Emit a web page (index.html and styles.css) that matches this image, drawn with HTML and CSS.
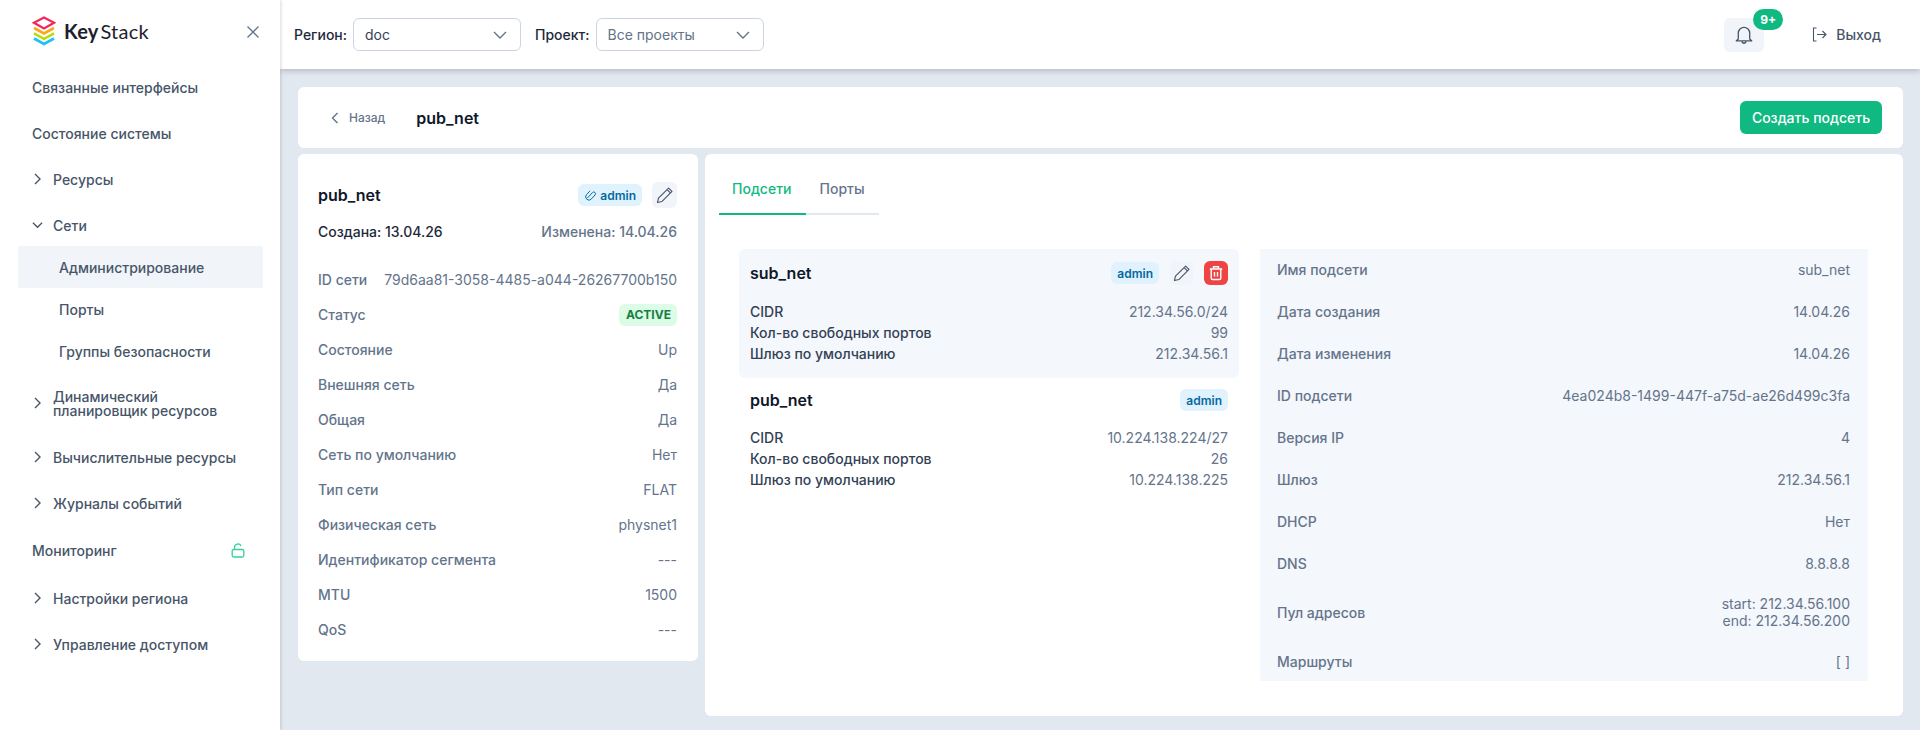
FILE: index.html
```html
<!DOCTYPE html>
<html lang="ru">
<head>
    <meta charset="UTF-8">
    <meta name="viewport" content="width=device-width, initial-scale=1.0">
    <title>pub_net</title>
    <link rel="stylesheet" href="styles.css">
</head>
<body>
    <aside class="sidebar">
        <div class="logo-row">
            <svg class="logo-mark" width="24" height="30" viewBox="0 0 24 30" fill="none" stroke-width="2.600" stroke-linejoin="miter">
                <path d="M2 22.500l10 5.500 10 -5.500" stroke="#19c3f5"/>
                <path d="M2 17.300l10 5.500 10 -5.500" stroke="#b5dc10"/>
                <path d="M2 12l10 5.500 10 -5.500" stroke="#f7a81b"/>
                <path d="M12 1.500l10 5.300 -10 5.700 -10 -5.700z" stroke="#f2295b" fill="#fff" stroke-width="2.200"/>
            </svg>
            <span class="logo-text">Key<span class="logo-light">Stack</span></span>
            <svg class="close-icon" width="14" height="14" viewBox="0 0 14 14" fill="none" stroke="#64748b" stroke-width="1.300"><path d="M1.500 1.500l11 11M12.500 1.500l-11 11"/></svg>
        </div>
        <nav class="menu">
            <a class="menu-item">Связанные интерфейсы</a>
            <a class="menu-item">Состояние системы</a>
            <a class="menu-item"><svg class="chev" viewBox="0 0 10 12"><path d="M2.500 1l5 5 -5 5"/></svg>Ресурсы</a>
            <a class="menu-item"><svg class="chev" viewBox="0 0 12 10"><path d="M1 2.500l5 5 5 -5"/></svg>Сети</a>
            <a class="menu-sub active">Администрирование</a>
            <a class="menu-sub">Порты</a>
            <a class="menu-sub">Группы безопасности</a>
            <a class="menu-item menu-tall"><svg class="chev" viewBox="0 0 10 12"><path d="M2.500 1l5 5 -5 5"/></svg><span class="two-line">Динамический<br>планировщик ресурсов</span></a>
            <a class="menu-item"><svg class="chev" viewBox="0 0 10 12"><path d="M2.500 1l5 5 -5 5"/></svg>Вычислительные ресурсы</a>
            <a class="menu-item"><svg class="chev" viewBox="0 0 10 12"><path d="M2.500 1l5 5 -5 5"/></svg>Журналы событий</a>
            <a class="menu-item menu-lock">Мониторинг
                <svg width="14" height="15" viewBox="0 0 14 15" fill="none" stroke="#34d399" stroke-width="1.300"><rect x="1.200" y="6.500" width="11.600" height="7.500" rx="1.500"/><path d="M3.500 6.500V4.200a3.400 3.400 0 0 1 6.500 -1.200"/></svg>
            </a>
            <a class="menu-item"><svg class="chev" viewBox="0 0 10 12"><path d="M2.500 1l5 5 -5 5"/></svg>Настройки региона</a>
            <a class="menu-item"><svg class="chev" viewBox="0 0 10 12"><path d="M2.500 1l5 5 -5 5"/></svg>Управление доступом</a>
        </nav>
    </aside>

    <div class="main">
        <header class="topbar">
            <span class="select-label">Регион:</span>
            <div class="select">doc
                <svg class="select-chev" viewBox="0 0 14 8"><path d="M1 1l6 6 6 -6"/></svg>
            </div>
            <span class="select-label project-label">Проект:</span>
            <div class="select select-muted">Все проекты
                <svg class="select-chev" viewBox="0 0 14 8"><path d="M1 1l6 6 6 -6"/></svg>
            </div>
            <div class="bell">
                <svg width="18" height="20" viewBox="0 0 18 20" fill="none" stroke="#475569" stroke-width="1.300" stroke-linejoin="round"><path d="M3.300 14V8a5.700 5.700 0 0 1 11.400 0v6l2 1.800H1.300z"/><path d="M6.800 16.500a2.300 2.300 0 0 0 4.400 0" stroke-width="1.500"/></svg>
                <span class="bell-badge">9+</span>
            </div>
            <a class="logout">
                <svg width="15" height="15" viewBox="0 0 15 15" fill="none" stroke="#475569" stroke-width="1.100"><path d="M4.500 1H1.500v13h3"/><path d="M5 7.500h9M10.500 4l3.500 3.500 -3.500 3.500"/></svg>
                Выход
            </a>
        </header>

        <div class="content">
            <div class="page-head">
                <a class="back"><svg width="8" height="12" viewBox="0 0 8 12" fill="none" stroke="#64748b" stroke-width="1.400"><path d="M6.500 1l-5 5 5 5"/></svg>Назад</a>
                <h1 class="page-title">pub_net</h1>
                <button class="btn-create">Создать подсеть</button>
            </div>

            <div class="columns">
                <section class="net-card">
                    <div class="net-head">
                        <h2 class="net-name">pub_net</h2>
                        <span class="tag"><svg width="13" height="13" viewBox="0 0 12 12" fill="none" stroke="#0369a1" stroke-width="0.900"><path d="M3.200 8.300l4.600 -5a1.600 1.600 0 0 1 2.400 2.200L6.800 9.200a3 3 0 0 1 -4.500 -4L5.600 1.700"/></svg>admin</span>
                        <button class="icon-btn"><svg class="pencil" viewBox="0 0 16 16"><path d="M11.200 1.800l3 3 -9 9 -3.900 .9 .9 -3.900z M9.800 3.200l3 3"/></svg></button>
                    </div>
                    <div class="dates">
                        <span class="created">Создана: 13.04.26</span>
                        <span class="changed">Изменена: 14.04.26</span>
                    </div>
                    <div class="net-rows">
                        <div class="row"><span class="label">ID сети</span><span>79d6aa81-3058-4485-a044-26267700b150</span></div>
                        <div class="row"><span class="label">Статус</span><span class="status">ACTIVE</span></div>
                        <div class="row"><span class="label">Состояние</span><span>Up</span></div>
                        <div class="row"><span class="label">Внешняя сеть</span><span>Да</span></div>
                        <div class="row"><span class="label">Общая</span><span>Да</span></div>
                        <div class="row"><span class="label">Сеть по умолчанию</span><span>Нет</span></div>
                        <div class="row"><span class="label">Тип сети</span><span>FLAT</span></div>
                        <div class="row"><span class="label">Физическая сеть</span><span>physnet1</span></div>
                        <div class="row"><span class="label">Идентификатор сегмента</span><span>---</span></div>
                        <div class="row"><span class="label">MTU</span><span>1500</span></div>
                        <div class="row"><span class="label">QoS</span><span>---</span></div>
                    </div>
                </section>

                <section class="detail-card">
                    <div class="tabs">
                        <a class="tab tab-active">Подсети</a>
                        <a class="tab">Порты</a>
                    </div>
                    <div class="detail-grid">
                        <div class="subnets">
                            <div class="subnet subnet-active">
                                <div class="subnet-head">
                                    <h3 class="subnet-name">sub_net</h3>
                                    <span class="tag tag-plain">admin</span>
                                    <button class="icon-btn icon-btn-sub"><svg class="pencil" viewBox="0 0 16 16"><path d="M11.200 1.800l3 3 -9 9 -3.900 .9 .9 -3.900z M9.800 3.200l3 3"/></svg></button>
                                    <button class="icon-btn icon-btn-del"><svg width="16" height="16" viewBox="0 0 16 16" fill="none" stroke="#fff" stroke-width="1.400"><path d="M1.800 4h12.400M5.500 4V1.800h5V4M3.200 4v9.200c0 .8 .5 1.300 1.300 1.300h7c.8 0 1.300 -.5 1.300 -1.300V4M6.500 7v4.500M9.500 7v4.500"/></svg></button>
                                </div>
                                <div class="kv"><span class="label">CIDR</span><span>212.34.56.0/24</span></div>
                                <div class="kv"><span class="label">Кол-во свободных портов</span><span>99</span></div>
                                <div class="kv"><span class="label">Шлюз по умолчанию</span><span>212.34.56.1</span></div>
                            </div>
                            <div class="subnet">
                                <div class="subnet-head">
                                    <h3 class="subnet-name">pub_net</h3>
                                    <span class="tag tag-plain">admin</span>
                                </div>
                                <div class="kv"><span class="label">CIDR</span><span>10.224.138.224/27</span></div>
                                <div class="kv"><span class="label">Кол-во свободных портов</span><span>26</span></div>
                                <div class="kv"><span class="label">Шлюз по умолчанию</span><span>10.224.138.225</span></div>
                            </div>
                        </div>
                        <div class="props">
                            <div class="prop"><span class="label">Имя подсети</span><span>sub_net</span></div>
                            <div class="prop"><span class="label">Дата создания</span><span>14.04.26</span></div>
                            <div class="prop"><span class="label">Дата изменения</span><span>14.04.26</span></div>
                            <div class="prop"><span class="label">ID подсети</span><span>4ea024b8-1499-447f-a75d-ae26d499c3fa</span></div>
                            <div class="prop"><span class="label">Версия IP</span><span>4</span></div>
                            <div class="prop"><span class="label">Шлюз</span><span>212.34.56.1</span></div>
                            <div class="prop"><span class="label">DHCP</span><span>Нет</span></div>
                            <div class="prop"><span class="label">DNS</span><span>8.8.8.8</span></div>
                            <div class="prop prop-tall"><span class="label">Пул адресов</span><span class="pool">start: 212.34.56.100<br>end: 212.34.56.200</span></div>
                            <div class="prop"><span class="label">Маршруты</span><span>[ ]</span></div>
                        </div>
                    </div>
                </section>
            </div>
        </div>
    </div>
</body>
</html>
```

FILE: styles.css
```css
:root {
    --color-primary: #10b981;
    --color-background: #e2e8f0;
    --color-panel: #f1f5f9;
    --color-text: #334155;
    --color-nav: #475569;
    --color-muted: #64748b;
}

* {
    box-sizing: border-box;
}

body {
    font-family: 'Inter', sans-serif;
    font-size: 14px;
    margin: 0;
    height: 730px;
    overflow: hidden;
    display: flex;
    background-color: var(--color-background);
    color: var(--color-text);
}

h1, h2, h3 {
    margin: 0;
}

button {
    font-family: inherit;
    border: none;
    cursor: pointer;
}

.label {
    font-weight: 500;
}

/* боковое меню */
.sidebar {
    width: 280px;
    flex-shrink: 0;
    background-color: white;
    box-shadow: 1px 0 3px rgba(0, 0, 0, 0.15);
    z-index: 2;
}

.logo-row {
    height: 64px;
    padding: 16px 0 0 32px;
    display: flex;
    align-items: flex-start;
}

.logo-text {
    margin: 3px 0 0 8px;
    font-family: 'Lato', sans-serif;
    font-size: 20px;
    line-height: 24px;
    font-weight: 700;
    letter-spacing: 0.2px;
    color: #1e1e2e;
}

.logo-light {
    font-weight: 400;
    margin-left: 2px;
}

.close-icon {
    margin: 9px 20px 0 auto;
}

.menu {
    display: flex;
    flex-direction: column;
}

.menu-item {
    height: 46px;
    padding: 0 32px;
    display: flex;
    align-items: center;
    font-weight: 500;
    font-size: 14px;
    color: var(--color-nav);
}

.menu-tall {
    height: 62px;
    padding-right: 10px;
}

.two-line {
    line-height: 14px;
    padding-top: 2px;
}

.menu-lock {
    height: 49px;
    justify-content: space-between;
    padding-right: 35px;
}

.chev {
    width: 11px;
    height: 12px;
    margin-right: 10px;
    fill: none;
    stroke: var(--color-nav);
    stroke-width: 1.400;
}

.menu-sub {
    height: 42px;
    margin: 0 17px 0 18px;
    padding-left: 41px;
    display: flex;
    align-items: center;
    font-weight: 500;
    font-size: 14px;
    color: var(--color-nav);
}

.menu-sub.active {
    margin-top: -2px;
    background-color: var(--color-panel);
    border-radius: 2px;
}

/* верхняя панель */
.main {
    flex: 1;
    min-width: 0;
}

.topbar {
    height: 69px;
    padding: 0 39px 0 14px;
    display: flex;
    align-items: center;
    background-color: white;
    box-shadow: 0 2px 6px rgba(0, 0, 0, 0.2);
    position: relative;
}

.select-label {
    font-weight: 500;
    color: #1e293b;
    margin-right: 6px;
}

.project-label {
    margin-left: 14px;
}

.select {
    width: 168px;
    height: 33px;
    padding: 0 12px 0 11px;
    display: flex;
    align-items: center;
    justify-content: space-between;
    border: 1px solid #cbd5e1;
    border-radius: 6px;
    color: var(--color-text);
}

.select-muted {
    color: var(--color-muted);
}

.select-chev {
    width: 14px;
    height: 8px;
    margin-right: 1px;
    fill: none;
    stroke: var(--color-muted);
    stroke-width: 1.400;
}

.bell {
    width: 40px;
    height: 34px;
    margin-left: auto;
    display: flex;
    align-items: center;
    justify-content: center;
    position: relative;
    background-color: var(--color-panel);
    border-radius: 6px;
}

.bell-badge {
    position: absolute;
    top: -9px;
    right: -19px;
    width: 30px;
    height: 21px;
    display: flex;
    align-items: center;
    justify-content: center;
    background-color: var(--color-primary);
    color: white;
    border-radius: 11px;
    font-size: 12px;
    font-weight: 700;
}

.logout {
    margin-left: 48px;
    display: flex;
    align-items: center;
    gap: 9px;
    font-size: 14px;
    font-weight: 500;
    color: var(--color-nav);
}

/* содержимое */
.content {
    padding: 18px 17px 0 18px;
}

.page-head {
    height: 61px;
    padding: 0 21px 0 33px;
    display: flex;
    align-items: center;
    background-color: white;
    border-radius: 6px;
}

.back {
    display: flex;
    align-items: center;
    gap: 10px;
    font-size: 12px;
    font-weight: 500;
    color: var(--color-muted);
}

.page-title {
    margin-left: 31px;
    font-size: 16px;
    font-weight: 600;
    color: #0f172a;
}

.btn-create {
    margin-left: auto;
    width: 142px;
    height: 33px;
    background-color: var(--color-primary);
    color: white;
    border-radius: 6px;
    font-size: 14px;
    font-weight: 500;
}

.columns {
    margin-top: 6px;
    display: flex;
    align-items: flex-start;
    gap: 7px;
}

.net-card {
    width: 400px;
    height: 507px;
    padding: 28px 21px 0 20px;
    flex-shrink: 0;
    background-color: white;
    border-radius: 6px;
}

.net-head {
    display: flex;
    align-items: center;
    height: 26px;
}

.net-name {
    margin-right: auto;
    font-size: 16px;
    font-weight: 600;
    color: #0f172a;
}

.tag {
    height: 22px;
    padding: 0 6px 0 6px;
    display: inline-flex;
    align-items: center;
    gap: 3px;
    background-color: #e0f2fe;
    color: #0369a1;
    border-radius: 6px;
    font-size: 12px;
    font-weight: 600;
}

.tag-plain {
    padding: 0 6px;
}

.icon-btn {
    width: 25px;
    height: 26px;
    margin-left: 10px;
    padding: 0;
    display: flex;
    align-items: center;
    justify-content: center;
    background-color: var(--color-panel);
    border-radius: 6px;
}

.pencil {
    width: 18px;
    height: 18px;
    fill: none;
    stroke: #475569;
    stroke-width: 1;
    stroke-linejoin: round;
}

.dates {
    margin-top: 14px;
    display: flex;
    justify-content: space-between;
    line-height: 20px;
    color: var(--color-muted);
}

.created {
    color: #1e293b;
    font-weight: 500;
}

.changed {
    font-weight: 500;
}

.net-rows {
    margin-top: 20px;
}

.row {
    height: 35px;
    display: flex;
    align-items: center;
    justify-content: space-between;
    color: var(--color-muted);
}

.status {
    height: 22px;
    padding: 0 6px 0 7px;
    display: flex;
    align-items: center;
    background-color: #dcfce7;
    color: #15803d;
    border-radius: 6px;
    font-size: 12px;
    font-weight: 700;
}

.detail-card {
    flex: 1;
    height: 562px;
    padding: 0 14px;
    background-color: white;
    border-radius: 6px;
}

.tabs {
    display: flex;
    width: 160px;
    padding-top: 26px;
    border-bottom: 2px solid #e2e8f0;
}

.tab {
    height: 33px;
    padding: 0 14px 0 14px;
    color: var(--color-muted);
    font-weight: 500;
}

.tab-active {
    padding-left: 13px;
    padding-right: 14px;
    color: var(--color-primary);
    border-bottom: 2px solid var(--color-primary);
    margin-bottom: -2px;
    height: 35px;
}

.detail-grid {
    margin: 34px 21px 0 20px;
    display: flex;
    gap: 21px;
}

.subnets {
    width: 500px;
}

.subnet {
    height: 127px;
    padding: 7px 11px 0;
    border-radius: 6px;
}

.subnet-active {
    height: 129px;
    padding-top: 9px;
    background-color: #f4f7fb;
}

.subnet-head {
    height: 30px;
    margin-bottom: 12px;
    display: flex;
    align-items: center;
}

.subnet-active .subnet-head {
    margin-bottom: 13px;
}

.subnet-name {
    margin-right: auto;
    font-size: 16px;
    font-weight: 600;
    color: #0f172a;
}

.icon-btn-sub {
    width: 23px;
    height: 24px;
    margin-left: 11px;
}

.icon-btn-del {
    width: 24px;
    height: 24px;
    margin-left: 11px;
    background-color: #ef4444;
    border-radius: 6px;
}

.kv {
    height: 21px;
    display: flex;
    align-items: center;
    justify-content: space-between;
}

.kv span:last-child {
    color: var(--color-muted);
}

.props {
    width: 608px;
    padding: 0 18px 0 17px;
    height: 432px;
    display: flex;
    flex-direction: column;
    justify-content: center;
    background-color: #f4f7fb;
}

.prop {
    height: 42px;
    flex-shrink: 0;
    display: flex;
    align-items: center;
    justify-content: space-between;
    color: var(--color-muted);
}

.prop-tall {
    height: 56px;
}

.pool {
    text-align: right;
    line-height: 17px;
}
```
